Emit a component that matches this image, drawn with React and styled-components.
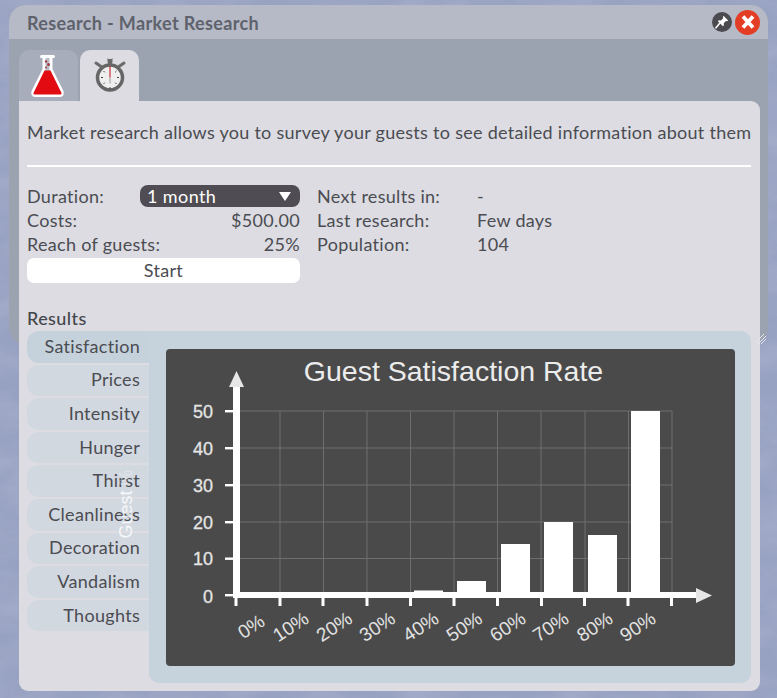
import React from 'react'
import styled, { createGlobalStyle } from 'styled-components'

const GlobalStyle = createGlobalStyle`
  html, body {
    margin: 0;
    height: 698px;
    overflow: hidden;
    background: #97a1c1;
  }
  * { box-sizing: border-box; }
`

const Wallpaper = styled.svg`
  position: fixed;
  inset: 0;
  width: 100%;
  height: 100%;
`

const Page = styled.div`
  position: relative;
  padding: 5px 9px;
  font-family: Lato, "Open Sans", sans-serif;
  font-size: 18px;
  color: #4b4c52;
`

const Frame = styled.div`
  position: relative;
  width: 759px;
  height: 340px;
  background: #9ba2b0;
  border-radius: 17px;
`

const TitleBar = styled.div`
  height: 34px;
  padding: 0 8px 0 18px;
  display: flex;
  align-items: center;
  background: #b6b9c6;
  border-radius: 17px 17px 0 0;
  color: #5e626c;
  font-weight: 700;
  letter-spacing: 0.35px;
`

const TitleText = styled.span`
  flex: 1;
  position: relative;
  top: 1px;
`

const RoundButton = styled.div`
  width: ${p => p.$size}px;
  height: ${p => p.$size}px;
  margin-left: 3px;
  border-radius: 50%;
  background: ${p => p.$bg};
  display: flex;
  align-items: center;
  justify-content: center;
`

const Tabs = styled.div`
  display: flex;
  gap: 2px;
  padding: 11px 0 0 10px;
`

const Tab = styled.div`
  width: 59px;
  height: 51px;
  border-radius: 10px 10px 0 0;
  background: ${p => (p.$active ? '#dcdce2' : '#a7adba')};
  display: flex;
  align-items: center;
  justify-content: center;
`

const Panel = styled.div`
  width: 741px;
  height: 590px;
  margin-left: 10px;
  padding-top: 21px;
  background: #dcdce2;
  border-radius: 0 9px 9px 9px;
`

const Intro = styled.div`
  padding-left: 8px;
  height: 20px;
  line-height: 20px;
  white-space: nowrap;
  letter-spacing: 0.28px;
`

const Divider = styled.div`
  height: 2px;
  margin: 23px 9px 17px 8px;
  background: #ffffff;
`

const Form = styled.div`
  display: flex;
  gap: 17px;
  padding-left: 8px;
`

const FormColumn = styled.div`
  width: ${p => p.$width}px;
  display: flex;
  flex-direction: column;
`

const Row = styled.div`
  height: 24px;
  display: flex;
  align-items: center;
  justify-content: space-between;
  white-space: nowrap;
  letter-spacing: 0.3px;
`

const InfoRow = styled(Row)`
  justify-content: flex-start;
`

const InfoLabel = styled.span`
  width: 160px;
`

const Select = styled.div`
  width: 160px;
  height: 22px;
  padding: 0 8px 0 7px;
  display: flex;
  align-items: center;
  justify-content: space-between;
  background: #4f4d53;
  border-radius: 8px;
  color: #ffffff;
  letter-spacing: 0.4px;
`

const Caret = styled.div`
  width: 0;
  height: 0;
  margin-right: 1px;
  border-left: 6.5px solid transparent;
  border-right: 6.5px solid transparent;
  border-top: 9px solid #ffffff;
`

const StartButton = styled.div`
  height: 25px;
  margin-top: 2px;
  padding-bottom: 2px;
  background: #ffffff;
  border-radius: 7px;
  display: flex;
  align-items: center;
  justify-content: center;
  letter-spacing: 0.3px;
`

const ResultsTitle = styled.div`
  margin: 24px 0 0 8px;
  height: 24px;
  line-height: 23px;
  font-weight: 500;
  letter-spacing: 0.4px;
  color: #45464b;
`

const Results = styled.div`
  display: flex;
  padding-left: 8px;
`

const SideTabs = styled.div`
  width: 122px;
  display: flex;
  flex-direction: column;
  gap: 2px;
`

const SideTab = styled.div`
  height: 31.6px;
  padding: 0 9px 2px 0;
  display: flex;
  align-items: center;
  justify-content: flex-end;
  background: ${p => (p.$active ? '#c5d2dc' : '#d2d8e0')};
  border-radius: 12px 0 0 12px;
  letter-spacing: 0.3px;
`

const ChartArea = styled.div`
  position: relative;
  width: 602px;
  height: 352px;
  padding: 18px 0 0 17px;
  background: #c6d2dc;
  border-radius: 0 10px 10px 10px;
`

const ChartCard = styled.div`
  width: 569px;
  height: 317px;
  background: #4a4a4a;
  border-radius: 4px;
  overflow: hidden;
`

const ChartSvg = styled.svg`
  display: block;
  font-family: "Liberation Sans", Arial, sans-serif;
`

const AxisLabel = styled.div`
  position: absolute;
  left: -23px;
  top: 172.5px;
  transform: translate(-50%, -50%) rotate(-90deg);
  font-family: "Liberation Sans", Arial, sans-serif;
  font-size: 18px;
  white-space: nowrap;
  color: rgba(255, 255, 255, 0.8);
`

const AxisUnit = styled.span`
  opacity: 0.4;
`

const ResizeGrip = styled.svg`
  position: absolute;
  right: 0;
  bottom: -1px;
`

const sideItems = ['Satisfaction', 'Prices', 'Intensity', 'Hunger', 'Thirst', 'Cleanliness', 'Decoration', 'Vandalism', 'Thoughts']

const gridY = [411, 448, 485, 522, 558.5]
const gridX = [280, 323.5, 367, 410.5, 454, 497.5, 541, 585, 628.5, 672]
const ticksX = [236, 280, 323, 367, 410.5, 454, 497.5, 541.5, 584.5, 628, 671.5]
const yLabels = [
  { text: '50', y: 411 },
  { text: '40', y: 448 },
  { text: '30', y: 485 },
  { text: '20', y: 522 },
  { text: '10', y: 558.5 },
  { text: '0', y: 596 },
]
const xLabels = [
  { text: '0%', x: 251.5 },
  { text: '10%', x: 291 },
  { text: '20%', x: 334.5 },
  { text: '30%', x: 377.5 },
  { text: '40%', x: 421 },
  { text: '50%', x: 464.5 },
  { text: '60%', x: 508 },
  { text: '70%', x: 551 },
  { text: '80%', x: 595 },
  { text: '90%', x: 638 },
]
const bars = [
  { x: 414, top: 590.5 },
  { x: 457, top: 581 },
  { x: 501, top: 544 },
  { x: 544, top: 522 },
  { x: 588, top: 535 },
  { x: 631, top: 411 },
]

const SatisfactionChart = () => (
  <ChartSvg width="569" height="317" viewBox="166 349 569 317">
    <text x="453.500" y="381" textAnchor="middle" fontSize="28.500" fill="#ececec">Guest Satisfaction Rate</text>

    {gridY.map(y => <line key={y} x1="240" x2="672" y1={y} y2={y} stroke="#6e6e6e" strokeWidth="1" />)}
    {gridX.map(x => <line key={x} x1={x} x2={x} y1="411" y2="592" stroke="#6e6e6e" strokeWidth="1" />)}

    {bars.map(b => <rect key={b.x} x={b.x} y={b.top} width="29" height={592 - b.top} fill="#ffffff" />)}

    {gridY.map(y => <rect key={y} x="225" y={y - 1} width="8" height="2.400" fill="#ffffff" />)}
    <rect x="225" y="594" width="8" height="2.400" fill="#ffffff" />
    {ticksX.map(x => <rect key={x} x={x - 1.5} y="598" width="3" height="8" fill="#ffffff" />)}

    <rect x="233" y="386" width="7" height="212" fill="#ffffff" />
    <rect x="233" y="592" width="464" height="6" fill="#ffffff" />
    <polygon points="236.5,371 229,387 244,387" fill="#e6e6e6" />
    <polygon points="696,588 712,595.5 696,603" fill="#e6e6e6" />

    {yLabels.map(l => (
      <text key={l.text} x="213" y={l.y + 6.5} textAnchor="end" fontSize="18" fill="#e4e4e4" stroke="#e4e4e4" strokeWidth="0.3">{l.text}</text>
    ))}
    {xLabels.map(l => (
      <text key={l.text} x={l.x} y="633" textAnchor="middle" fontSize="19" fill="#e2e2e2" transform={`rotate(-33 ${l.x} 627)`}>{l.text}</text>
    ))}
  </ChartSvg>
)

const FlaskIcon = () => (
  <svg width="40" height="46" viewBox="-0.5 -0.5 40 46">
    <path d="M12 3h12M14.500 3v13L3.500 38q-1.500 4 3 4h23q4.500 0 3-4L21.500 16V3" fill="#b9bdc6" stroke="#ffffff" strokeWidth="3" strokeLinejoin="round" strokeLinecap="round" />
    <path d="M15 17h6L32 39.500q.5 1.500-1.500 1.500h-25q-2 0-1.500-1.500z" fill="#e30b12" />
    <circle cx="16.500" cy="8" r="1.200" fill="#a33a42" />
    <circle cx="19" cy="11" r="1.500" fill="#a33a42" />
    <circle cx="16.500" cy="14" r="1" fill="#a33a42" />
  </svg>
)

const StopwatchIcon = () => (
  <svg width="34" height="36" viewBox="0 1 34 36">
    <path d="M3 6l5 3.500M31 6l-5 3.500" stroke="#6a6a6a" strokeWidth="3" strokeLinecap="round" />
    <path d="M14.500 1l1 1h3l1-1v4l-1 2h-3l-1-2z" fill="#6a6a6a" />
    <circle cx="17" cy="20.500" r="12.500" fill="#efefef" stroke="#666666" strokeWidth="3.500" />
    <path d="M17 30v2M8 20.500h2M24 20.500h2M10.500 14l1.300 1.300M23.500 14l-1.300 1.300M10.500 27l1.300-1.300M23.500 27l-1.300-1.300" stroke="#444444" strokeWidth="1" />
    <path d="M17 9v11.500" stroke="#c9303a" strokeWidth="1.200" />
    <path d="M17 20.500v6" stroke="#999999" strokeWidth="1" />
  </svg>
)

const PinIcon = () => (
  <svg width="14" height="14" viewBox="0 0 14 14">
    <path d="M8.500 0.800l4.700 4.700-1.300.8-.9-.3-2.300 2.300.2 2-1 1-5-5 1-1 2 .2 2.300-2.300-.3-.9z" fill="#ffffff" />
    <path d="M4.500 8.500L1 12.800" stroke="#ffffff" strokeWidth="1.600" strokeLinecap="round" />
  </svg>
)

const CloseIcon = () => (
  <svg width="14" height="14" viewBox="0 0 14 14">
    <path d="M2 1.500L12 12.500M12 1.500L2 12.500" stroke="#ffffff" strokeWidth="3.800" />
  </svg>
)

const App = () => (
  <>
    <GlobalStyle />
    <Wallpaper>
      <filter id="marble">
        <feTurbulence type="fractalNoise" baseFrequency="0.02 0.04" numOctaves="4" seed="7" />
        <feColorMatrix values="0 0 0 0 0.84  0 0 0 0 0.86  0 0 0 0 0.93  1.100 0 0 0 -0.3" />
      </filter>
      <rect width="100%" height="100%" filter="url(#marble)" opacity="0.22" />
    </Wallpaper>
    <Page>
      <Frame>
        <TitleBar>
          <TitleText>Research - Market Research</TitleText>
          <RoundButton $size={20} $bg="#4a4a4f"><PinIcon /></RoundButton>
          <RoundButton $size={25} $bg="#e43d25"><CloseIcon /></RoundButton>
        </TitleBar>
        <Tabs>
          <Tab><FlaskIcon /></Tab>
          <Tab $active><StopwatchIcon /></Tab>
        </Tabs>
        <Panel>
          <Intro>Market research allows you to survey your guests to see detailed information about them</Intro>
          <Divider />
          <Form>
            <FormColumn $width={273}>
              <Row>
                <span>Duration:</span>
                <Select>
                  <span>1 month</span>
                  <Caret />
                </Select>
              </Row>
              <Row><span>Costs:</span><span>$500.00</span></Row>
              <Row><span>Reach of guests:</span><span>25%</span></Row>
              <StartButton>Start</StartButton>
            </FormColumn>
            <FormColumn $width={300}>
              <InfoRow><InfoLabel>Next results in:</InfoLabel><span>-</span></InfoRow>
              <InfoRow><InfoLabel>Last research:</InfoLabel><span>Few days</span></InfoRow>
              <InfoRow><InfoLabel>Population:</InfoLabel><span>104</span></InfoRow>
            </FormColumn>
          </Form>
          <ResultsTitle>Results</ResultsTitle>
          <Results>
            <SideTabs>
              {sideItems.map((item, i) => <SideTab key={item} $active={i === 0}>{item}</SideTab>)}
            </SideTabs>
            <ChartArea>
              <ChartCard>
                <SatisfactionChart />
              </ChartCard>
              <AxisLabel>Guest <AxisUnit>%</AxisUnit></AxisLabel>
            </ChartArea>
          </Results>
        </Panel>
        <ResizeGrip width="14" height="14" viewBox="0 0 14 14">
          <path d="M2 10l8-8M4 12l8-8M7 12l5-5" stroke="#e6e8ee" strokeWidth="1" />
        </ResizeGrip>
      </Frame>
    </Page>
  </>
)

export default App
